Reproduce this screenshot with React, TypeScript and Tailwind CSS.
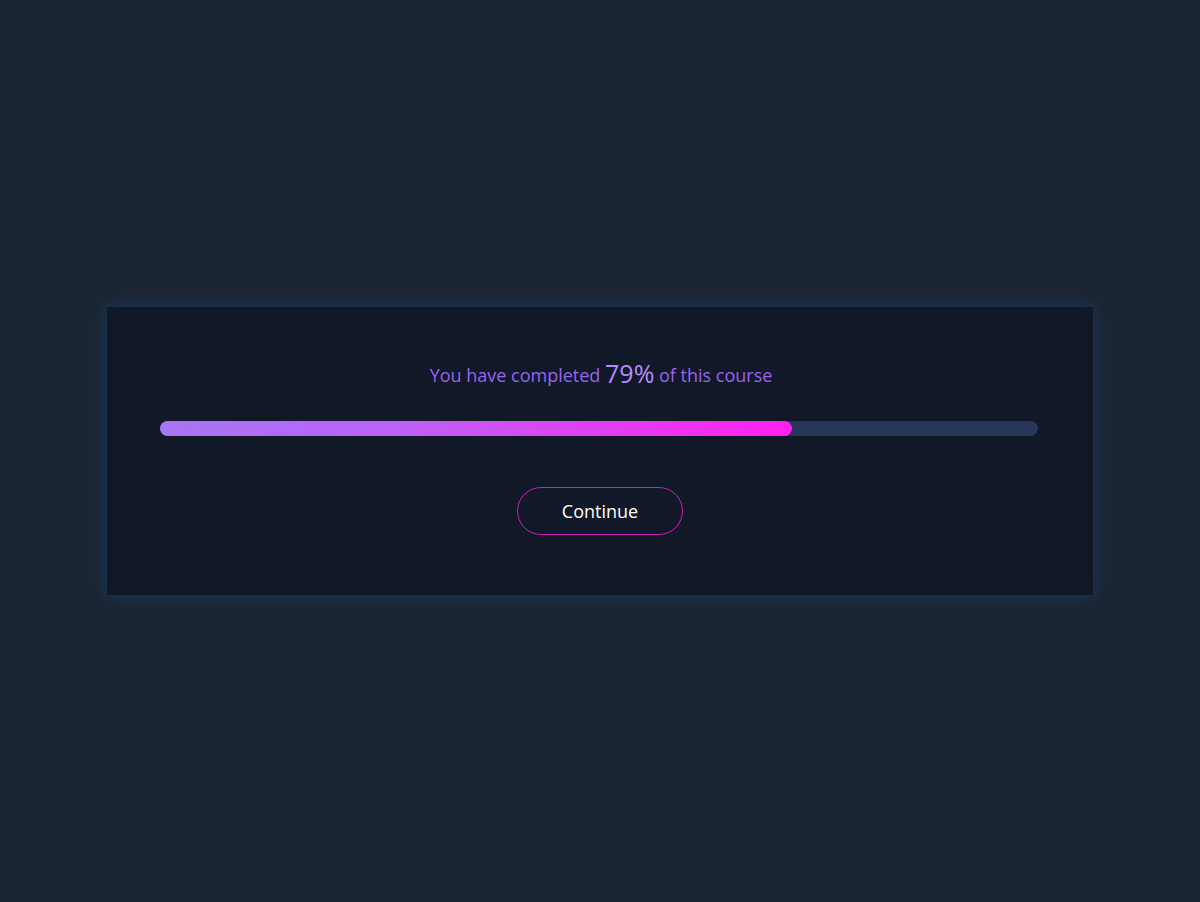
export default function App() {
  const percent = 79;
  const fill = 72;
  return (
    <div className="min-h-[902px] w-full bg-[#1b2432] flex items-center justify-center" style={{ fontFamily: '"Open Sans", "Noto Sans", sans-serif' }}>
      <div className="w-[986px] h-[288px] bg-[#111827] shadow-[0_0_16px_4px_rgba(30,64,110,0.55)] flex flex-col items-center pt-[51px] px-[53px]">
        <p className="text-[18px] leading-[30px] text-[#9a63f2] pl-[2px]">
          You have completed <span className="text-[25px] text-[#b48cf9] align-[-1px]">{percent}%</span> of this course
        </p>
        <div className="mt-[31px] self-start w-[878px] h-[15px] rounded-full bg-[#28365a]">
          <div
            className="h-full rounded-full bg-[linear-gradient(90deg,#a775f6_0%,#bb64f6_35%,#e040f2_70%,#ff20ee_100%)]"
            style={{ width: `${fill}%` }}
          />
        </div>
        <button className="mt-[51px] w-[166px] h-[48px] rounded-full border border-[#d21cbb] text-white text-[18px]">
          Continue
        </button>
      </div>
    </div>
  );
}
